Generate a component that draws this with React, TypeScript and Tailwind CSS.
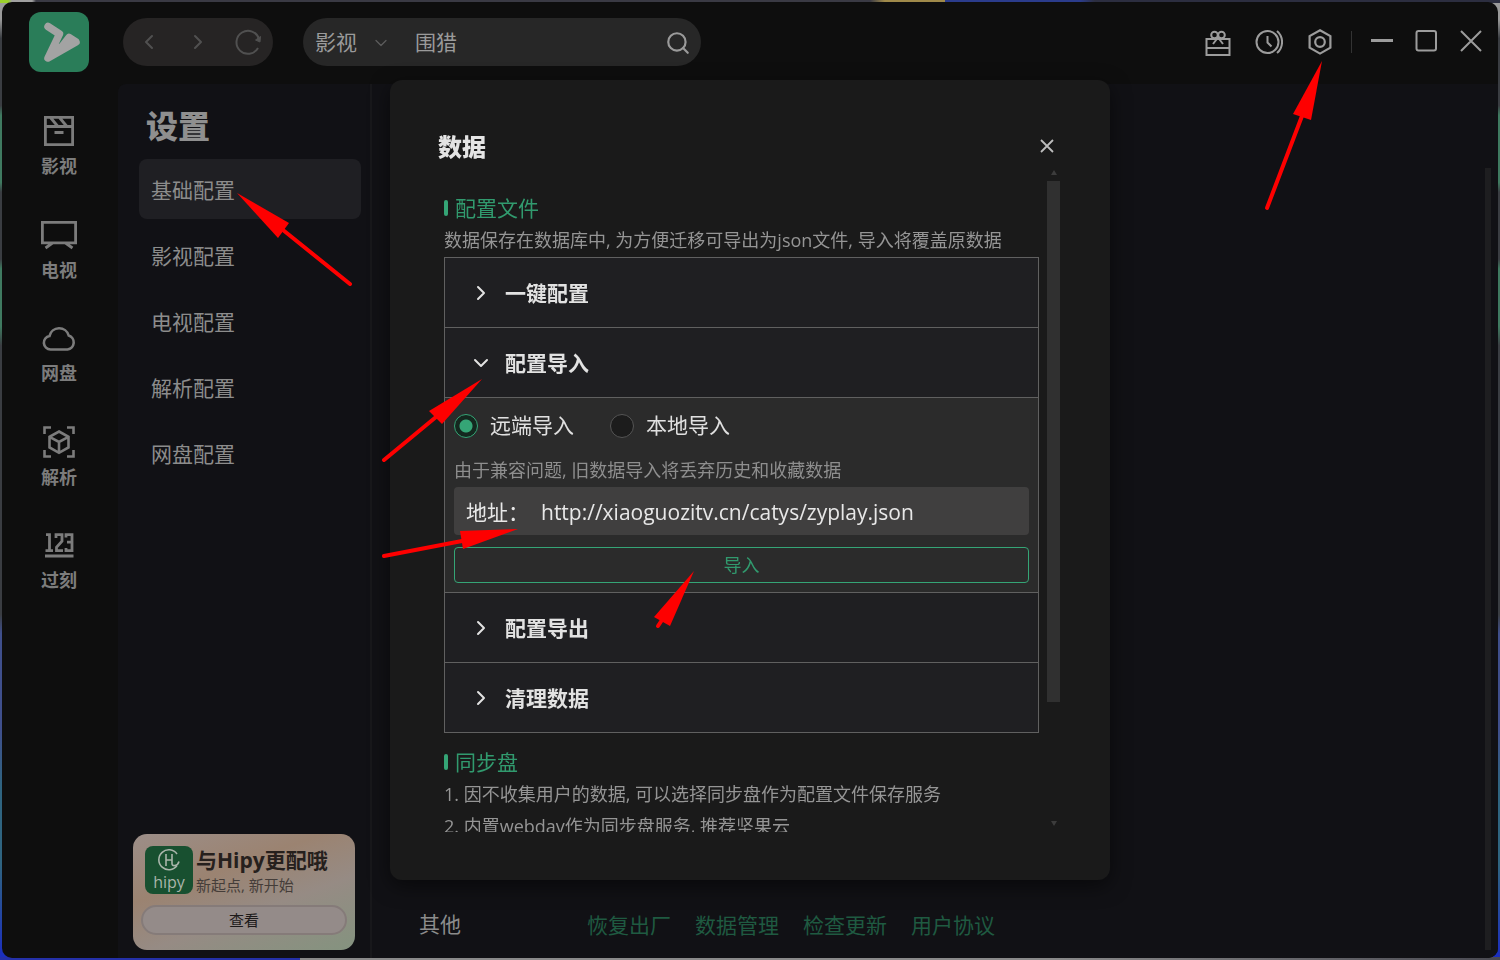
import { useState } from "react";
import type { ReactNode } from "react";
import { clsx } from "clsx";
import { ChevronDown, ChevronLeft, ChevronRight, Search } from "lucide-react";

const navItems: { label: string; icon: ReactNode }[] = [
  {
    label: "影视",
    icon: (
      <svg width="36" height="36" viewBox="0 0 36 36" fill="none" stroke="currentColor" strokeWidth="2.8">
        <path d="M4.400 4.400h27.200v27.200H4.400zM4 13.500h28M9 4l7.500 9M18 4l7.500 9M13.500 19.500h9" />
      </svg>
    ),
  },
  {
    label: "电视",
    icon: (
      <svg width="36" height="36" viewBox="0 0 36 36" fill="none" stroke="currentColor" strokeWidth="2.8">
        <path d="M1.400 5.400h33.200v20.400H1.400zM11.500 26l-7 5M24.500 26l7 5" />
      </svg>
    ),
  },
  {
    label: "网盘",
    icon: (
      <svg width="36" height="36" viewBox="0 0 36 36" fill="none" stroke="currentColor" strokeWidth="2.600">
        <path d="M9.500 29.500a6.800 6.800 0 0 1-1-13.500 9.900 9.900 0 0 1 19.200-.5A7.200 7.200 0 0 1 26.500 29.500z" />
      </svg>
    ),
  },
  {
    label: "解析",
    icon: (
      <svg width="36" height="36" viewBox="0 0 36 36" fill="none" stroke="currentColor" strokeWidth="2.600">
        <path d="M3.500 10V3.500H10M26 3.500h6.500V10M32.500 26v6.500H26M10 32.500H3.500V26" />
        <path d="M18 7.500l9.500 5.300v10.600L18 28.800l-9.500-5.400V12.800zM8.500 12.800L18 18l9.500-5.200M18 18v10.500" />
      </svg>
    ),
  },
  {
    label: "过刻",
    icon: (
      <svg width="36" height="36" viewBox="0 0 36 36" fill="none" stroke="currentColor" strokeWidth="2.800">
        <path d="M4 29h28.500" strokeWidth="3" />
        <path d="M5 7.700h3.500V24M4.500 23.600h7.500M15 11V7.700h6v6.500l-5.500 6v3.400h6.500M25 10.500V7.700h6v15.900H25V21M26 15.200h5" />
      </svg>
    ),
  },
];

const settingsMenu = ["基础配置", "影视配置", "电视配置", "解析配置", "网盘配置"];
const otherActions = ["恢复出厂", "数据管理", "检查更新", "用户协议"];

function Logo() {
  return (
    <svg className="size-[60px] shrink-0" viewBox="0 0 60 60" aria-label="ZyPlayer">
      <rect width="60" height="60" rx="12" fill="#2a7d59" />
      <path
        d="M19 14.500l11.500 7.500L19 46l28-16-7-4.500-7 9-5 3"
        fill="none"
        stroke="#a3a3a3"
        strokeWidth="7.500"
        strokeLinecap="round"
        strokeLinejoin="round"
      />
    </svg>
  );
}

function TitleBar() {
  return (
    <header className="flex h-[82px] shrink-0 items-start pt-2.5 pr-[15px] pl-[27px]">
      <Logo />
      <div className="mt-1.5 ml-[34px] flex h-12 w-[150px] shrink-0 items-center justify-between rounded-full bg-[#262424] pr-3 pl-3.5 text-[#505050]">
        <button aria-label="后退">
          <ChevronLeft size={24} strokeWidth={2} />
        </button>
        <button aria-label="前进">
          <ChevronRight size={24} strokeWidth={2} />
        </button>
        <button aria-label="刷新">
          <svg width="26" height="26" viewBox="0 0 26 26" fill="none" stroke="currentColor" strokeWidth="2">
            <path d="M23 19A11.500 11.500 0 1 1 24 10" />
            <path d="M25.500 7.500l-.5 5.500-4.500-2z" fill="currentColor" strokeWidth="1" />
          </svg>
        </button>
      </div>
      <div className="mt-1.5 ml-[30px] flex h-12 w-[398px] items-center rounded-full bg-[#272727] pt-0.5 pr-2.5 pl-3 text-[21px] text-[#9a9a9a]">
        <button className="flex items-center gap-3.5">
          影视
          <ChevronDown size={20} strokeWidth={1.500} className="text-[#5c5c5c]" />
        </button>
        <input
          aria-label="搜索"
          defaultValue="围猎"
          className="ml-6 min-w-0 flex-1 bg-transparent outline-none"
        />
        <button aria-label="开始搜索">
          <Search size={26} strokeWidth={2} />
        </button>
      </div>
      <div className="mt-4 ml-auto flex h-7 items-center text-[#9c9c9c]">
        <button aria-label="福利" className="mr-[23px]">
          <svg width="28" height="28" viewBox="0 0 28 28" fill="none" stroke="currentColor" strokeWidth="2">
            <path d="M2.500 11h23v16h-23zM2.500 20h23" />
            <circle cx="10.500" cy="7" r="3.300" />
            <circle cx="17.500" cy="7" r="3.300" />
            <path d="M14 9.500l-5 6.500M14 9.500l5 6.500" />
          </svg>
        </button>
        <button aria-label="历史" className="mr-[23px]">
          <svg width="28" height="28" viewBox="0 0 28 28" fill="none" stroke="currentColor" strokeWidth="2">
            <circle cx="12.500" cy="14" r="11" />
            <path d="M12.500 8v6.500l4 4M22 3a14.500 14.500 0 0 1 0 22" />
          </svg>
        </button>
        <button aria-label="设置" className="mr-[17px]">
          <svg width="28" height="28" viewBox="0 0 28 28" fill="none" stroke="currentColor" strokeWidth="2.200">
            <path d="M14 2.200l10.400 5.900v11.600L14 25.600 3.600 19.700V8.100z" />
            <circle cx="14" cy="14" r="4.800" />
          </svg>
        </button>
        <span className="mr-[19px] h-[22px] w-px bg-[#333]" />
        <button aria-label="最小化" className="mr-[21px]">
          <svg width="22" height="28" viewBox="0 0 22 28" stroke="currentColor" strokeWidth="3">
            <path d="M0 12.500h22" />
          </svg>
        </button>
        <button aria-label="最大化" className="mr-[21px]">
          <svg width="24" height="28" viewBox="0 0 24 28" fill="none" stroke="currentColor" strokeWidth="2">
            <rect x="2.500" y="3" width="19.500" height="19.500" rx="2" />
          </svg>
        </button>
        <button aria-label="关闭">
          <svg width="24" height="28" viewBox="0 0 24 28" stroke="currentColor" strokeWidth="2">
            <path d="M2 3l20 20M22 3L2 23" />
          </svg>
        </button>
      </div>
    </header>
  );
}

function SideNav() {
  return (
    <nav className="flex w-[116px] shrink-0 pt-[29px]">
      <ul className="flex h-[480px] w-[114px] flex-col items-center justify-between text-[#7c7c7c]">
        {navItems.map((item) => (
          <li key={item.label}>
            <a href="#" className="flex flex-col items-center gap-1 text-lg leading-[26px] font-bold">
              {item.icon}
              {item.label}
            </a>
          </li>
        ))}
      </ul>
    </nav>
  );
}

function PromoCard() {
  return (
    <div className="mt-auto mb-2 ml-[15px] w-[222px] rounded-[14px] bg-[linear-gradient(160deg,#9c8e88_0%,#9b8371_35%,#968b84_62%,#84937f_100%)] px-2 pt-3 pb-[15px]">
      <div className="flex gap-[3px] pl-1">
        <div className="flex size-12 shrink-0 flex-col items-center rounded-lg bg-[#185030] pt-0.5 text-[#a9b5ab]">
          <svg width="24" height="24" viewBox="0 0 24 24" fill="none" stroke="currentColor" strokeWidth="1.600">
            <path d="M20 17.500A10 10 0 1 1 20 6" />
            <path d="M9 6v12M15 6v9.500q0 2.500 3 2t4-4M9 12h6" />
          </svg>
          <span className="text-base leading-5">hipy</span>
        </div>
        <div className="flex flex-col text-[#26201d]">
          <span className="text-[21px] leading-7 font-bold whitespace-nowrap">与Hipy更配哦</span>
          <span className="text-[15px] leading-[22px] text-[#453d39]">新起点, 新开始</span>
        </div>
      </div>
      <button className="mt-[9px] block h-[30px] w-full rounded-full border-2 border-[#857b79] bg-[#948b89] text-[15px] leading-6 text-[#1d1a1a]">
        查看
      </button>
    </div>
  );
}

function SettingsMenu() {
  return (
    <aside className="flex w-[254px] shrink-0 flex-col rounded-tl-lg border-r-2 border-[#18181b] pt-[17px]">
      <h1 className="ml-7 text-[32px] leading-[50px] font-black text-[#8f8f8f]">设置</h1>
      <ul className="mt-2 ml-[21px] flex w-[222px] flex-col gap-1.5">
        {settingsMenu.map((label, i) => (
          <li key={label}>
            <a
              href="#"
              className={clsx(
                "block rounded-lg pt-0.5 pl-3 text-[21px] leading-[58px] text-[#8c8c8c]",
                i === 0 && "bg-[#1f1f23]"
              )}
            >
              {label}
            </a>
          </li>
        ))}
      </ul>
      <PromoCard />
    </aside>
  );
}

function SectionTitle({ children }: { children: ReactNode }) {
  return (
    <h3 className="flex items-center gap-[7px] text-[21px] leading-8 text-[#319a6e]">
      <span className="h-4 w-1 rounded-sm bg-[#35a576]" />
      {children}
    </h3>
  );
}

function AccordionItem({
  title,
  open,
  onToggle,
  children,
}: {
  title: string;
  open: boolean;
  onToggle: () => void;
  children?: ReactNode;
}) {
  const Chevron = open ? ChevronDown : ChevronRight;
  return (
    <div className="border-b border-[#606060]">
      <button
        onClick={onToggle}
        aria-expanded={open}
        className="flex h-[69px] w-full items-center gap-3 bg-[#1f1f22] pl-6 text-[21px] font-bold text-[#e2e2e2]"
      >
        <Chevron size={24} strokeWidth={2} />
        <span className="pt-0.5">{title}</span>
      </button>
      {open && children && <div className="border-t border-[#606060] bg-[#2b2b2b]">{children}</div>}
    </div>
  );
}

function ImportForm() {
  const [source, setSource] = useState("remote");
  const radioClass =
    "size-6 appearance-none rounded-full border border-[#555] bg-[#1c1c1c] checked:border-[#35a576] checked:bg-[radial-gradient(circle,#35a576_0_6px,#14281f_7px)]";

  return (
    <form className="px-[9px] pb-[9px]" onSubmit={(e) => e.preventDefault()}>
      <div className="flex h-14 items-center gap-9 text-[21px] text-[#e0e0e0]">
        <label className="flex items-center gap-3">
          <input
            type="radio"
            name="source"
            className={radioClass}
            checked={source === "remote"}
            onChange={() => setSource("remote")}
          />
          远端导入
        </label>
        <label className="flex items-center gap-3">
          <input
            type="radio"
            name="source"
            className={radioClass}
            checked={source === "local"}
            onChange={() => setSource("local")}
          />
          本地导入
        </label>
      </div>
      <p className="pb-px text-lg leading-8 text-[#8e8e8e]">由于兼容问题, 旧数据导入将丢弃历史和收藏数据</p>
      <div className="flex h-12 items-center gap-3 rounded-[4px] bg-[#403f3f] pt-[3px] pl-3 text-[21px] text-[#e8e8e8]">
        <label htmlFor="address">地址：</label>
        <input
          id="address"
          defaultValue="http://xiaoguozitv.cn/catys/zyplay.json"
          className="min-w-0 flex-1 bg-transparent font-medium outline-none"
        />
      </div>
      <button className="mt-3 block h-9 w-full rounded-[4px] border border-[#35a576] text-lg leading-[34px] text-[#319a6e]">
        导入
      </button>
    </form>
  );
}

function DataDialog() {
  const [openItem, setOpenItem] = useState("配置导入");

  return (
    <div className="fixed inset-0 flex items-center justify-center">
      <section
        role="dialog"
        aria-label="数据"
        className="flex h-[800px] w-[720px] flex-col rounded-xl bg-[#1a1a1a] p-12 shadow-[0_6px_20px_rgba(0,0,0,0.5)]"
      >
        <div className="flex h-9 shrink-0 items-center justify-between pr-2">
          <h2 className="pt-0.5 text-2xl font-black text-[#e4e4e4]">数据</h2>
          <button aria-label="关闭" className="text-[#bdbdbd]">
            <svg width="14" height="14" viewBox="0 0 14 14" stroke="currentColor" strokeWidth="1.800">
              <path d="M1 1l12 12M13 1L1 13" />
            </svg>
          </button>
        </div>
        <div className="flex min-h-0 flex-1 gap-2 pr-0.5 pl-1.5">
          <div className="min-w-0 flex-1 overflow-hidden pt-7">
            <SectionTitle>配置文件</SectionTitle>
            <p className="pb-px text-lg leading-8 text-[#959595]">
              数据保存在数据库中, 为方便迁移可导出为json文件, 导入将覆盖原数据
            </p>
            <div className="border-x border-t border-[#606060]">
              {["一键配置", "配置导入", "配置导出", "清理数据"].map((title) => (
                <AccordionItem
                  key={title}
                  title={title}
                  open={openItem === title}
                  onToggle={() => setOpenItem(openItem === title ? "" : title)}
                >
                  {title === "配置导入" && <ImportForm />}
                </AccordionItem>
              ))}
            </div>
            <div className="mt-[13px]">
              <SectionTitle>同步盘</SectionTitle>
            </div>
            <ol className="text-lg leading-8 text-[#959595]">
              <li>1. 因不收集用户的数据, 可以选择同步盘作为配置文件保存服务</li>
              <li>2. 内置webdav作为同步盘服务, 推荐坚果云</li>
            </ol>
          </div>
          <div className="flex w-[13px] flex-col items-center justify-between pt-1.5 pb-1.5">
            <div className="flex w-full flex-col items-center gap-1.5">
              <svg width="6" height="5" viewBox="0 0 6 5" fill="#3c3c3c">
                <path d="M3 0l3 5H0z" />
              </svg>
              <div className="h-[521px] w-full bg-[#303030]" />
            </div>
            <svg width="6" height="5" viewBox="0 0 6 5" fill="#3c3c3c">
              <path d="M3 5l3-5H0z" />
            </svg>
          </div>
        </div>
      </section>
    </div>
  );
}

const arrows = [
  { head: "237,193 289,223 278,238", line: "M283 230L350 284" },
  { head: "1322,61 1293,114 1311,120", line: "M1302 116L1267 208" },
  { head: "482,379 429,411 442,424", line: "M436 417L384 460" },
  { head: "518,529 460,531 463,549", line: "M462 541L384 556" },
  { head: "694,571 654,617 670,626", line: "M662 620L658 626" },
];

function Annotations() {
  return (
    <svg
      className="pointer-events-none fixed top-0 left-0"
      width="1500"
      height="960"
      fill="#fe0000"
      stroke="#fe0000"
      strokeLinecap="round"
    >
      {arrows.map((arrow) => (
        <g key={arrow.head}>
          <polygon points={arrow.head} stroke="none" />
          <path d={arrow.line} strokeWidth="4" />
        </g>
      ))}
    </svg>
  );
}

export default function App() {
  return (
    // the 2px padding leaves a sliver of the desktop wallpaper around the window
    <div className="h-screen p-0.5 font-['Open_Sans','Noto_Sans_CJK_SC',sans-serif] [background:linear-gradient(90deg,#9bd12c_0_8px,#a0a0a0_12px_32px,#3a3a44_36px_58%,#a08a4a_59%_63%,#2b3c8c_63%_72%,#2c2e40_73%)_0_0/100%_3px_no-repeat,linear-gradient(90deg,#2430a8_0_20%,#8a8a8a_20%_70%,#4a4a52_100%)_0_100%/100%_3px_no-repeat,linear-gradient(180deg,#9a9a9a_0_2%,#3a3d42_4%_11%,#3f7a60_12%_19%,#3a3d42_20%_27%,#3f7a60_28%_34%,#3a3d42_36%_64%,#3f4f8c_66%_76%,#2f6480_82%_90%,#1a2cc0_100%)]">
      <div className="flex h-full flex-col overflow-hidden rounded-[10px] bg-[#0e0e0e]">
        <TitleBar />
        <div className="flex min-h-0 flex-1">
          <SideNav />
          <div className="flex min-w-0 flex-1 rounded-tl-lg bg-[#111115]">
            <SettingsMenu />
            <main className="flex min-w-0 flex-1 justify-between pt-[84px] pr-[7px] pb-2">
              <div className="flex items-end pl-[47px] text-[21px] leading-[42px]">
                <span className="mb-[5px] w-[168px] text-[#8c8c8c]">其他</span>
                <div className="mb-1 flex gap-6">
                  {otherActions.map((label) => (
                    <a key={label} href="#" className="text-[#1f5a41]">
                      {label}
                    </a>
                  ))}
                </div>
              </div>
              <div className="w-1.5 bg-[#1e1e20]" />
            </main>
          </div>
        </div>
      </div>
      <DataDialog />
      <Annotations />
    </div>
  );
}
